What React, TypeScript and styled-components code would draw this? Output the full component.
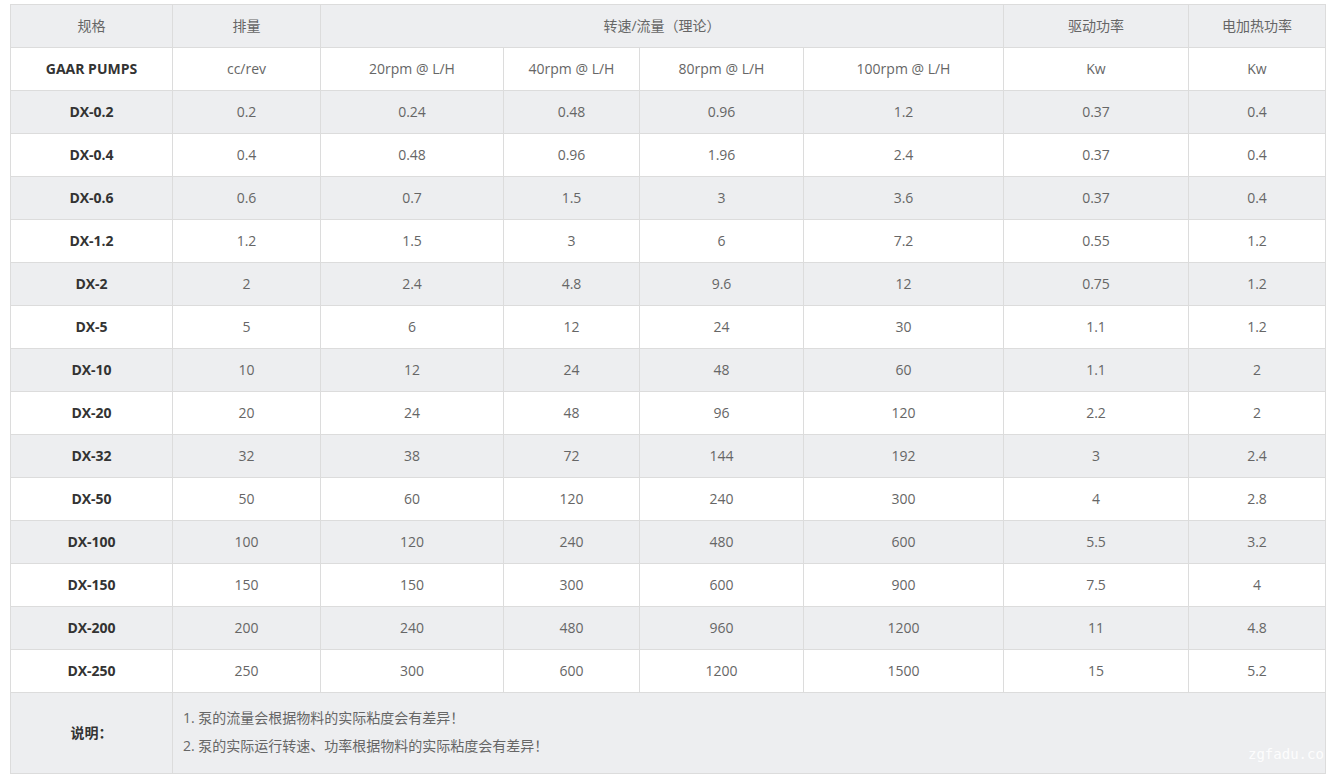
import * as React from 'react';
import styled, { createGlobalStyle } from 'styled-components';

const GlobalStyle = createGlobalStyle`
  html, body {
    margin: 0;
    padding: 0;
    background: #fff;
  }
  body {
    font-family: 'Open Sans', 'Noto Sans CJK SC', sans-serif;
    color: #666;
  }
`;

const Page = styled.div`
  position: relative;
  width: 1339px;
  height: 778px;
  padding: 4px 0 0 10px;
  box-sizing: border-box;
  overflow: hidden;
`;

const Table = styled.table`
  border-collapse: collapse;
  table-layout: fixed;
  width: 1315px;
  font-size: 14px;
`;

const Row = styled.tr<{ $shade?: boolean }>`
  height: 43px;
  background: ${(p) => (p.$shade ? '#edeef0' : '#fff')};
`;

const Cell = styled.td<{ $bold?: boolean }>`
  border: 1px solid #dcdcdc;
  text-align: center;
  vertical-align: middle;
  padding: 0 6px 2px;
  color: ${(p) => (p.$bold ? '#333' : '#666')};
  font-weight: ${(p) => (p.$bold ? 700 : 400)};
  white-space: nowrap;
`;

const NoteRow = styled.tr`
  height: 81px;
  background: #edeef0;
`;

const NoteCell = styled.td`
  border: 1px solid #dcdcdc;
  text-align: left;
  vertical-align: middle;
  padding: 0 10px 2px;
  line-height: 28px;
  color: #666;
`;

const Watermark = styled.div`
  position: absolute;
  left: 1248px;
  top: 746px;
  font-family: 'DejaVu Sans Mono', 'Liberation Mono', monospace;
  font-size: 14px;
  color: rgba(255, 255, 255, 0.9);
  white-space: nowrap;
`;

const widths = [162, 148, 183, 136, 164, 200, 185, 137];

const rows: string[][] = [
  ['DX-0.2', '0.2', '0.24', '0.48', '0.96', '1.2', '0.37', '0.4'],
  ['DX-0.4', '0.4', '0.48', '0.96', '1.96', '2.4', '0.37', '0.4'],
  ['DX-0.6', '0.6', '0.7', '1.5', '3', '3.6', '0.37', '0.4'],
  ['DX-1.2', '1.2', '1.5', '3', '6', '7.2', '0.55', '1.2'],
  ['DX-2', '2', '2.4', '4.8', '9.6', '12', '0.75', '1.2'],
  ['DX-5', '5', '6', '12', '24', '30', '1.1', '1.2'],
  ['DX-10', '10', '12', '24', '48', '60', '1.1', '2'],
  ['DX-20', '20', '24', '48', '96', '120', '2.2', '2'],
  ['DX-32', '32', '38', '72', '144', '192', '3', '2.4'],
  ['DX-50', '50', '60', '120', '240', '300', '4', '2.8'],
  ['DX-100', '100', '120', '240', '480', '600', '5.5', '3.2'],
  ['DX-150', '150', '150', '300', '600', '900', '7.5', '4'],
  ['DX-200', '200', '240', '480', '960', '1200', '11', '4.8'],
  ['DX-250', '250', '300', '600', '1200', '1500', '15', '5.2'],
];

export default function App() {
  return (
    <>
      <GlobalStyle />
      <Page>
        <Table>
          <colgroup>
            {widths.map((w, i) => (
              <col key={i} style={{ width: w }} />
            ))}
          </colgroup>
          <tbody>
            <Row $shade>
              <Cell>规格</Cell>
              <Cell>排量</Cell>
              <Cell colSpan={4}>转速/流量（理论）</Cell>
              <Cell>驱动功率</Cell>
              <Cell>电加热功率</Cell>
            </Row>
            <Row>
              <Cell $bold>GAAR PUMPS</Cell>
              <Cell>cc/rev</Cell>
              <Cell>20rpm @ L/H</Cell>
              <Cell>40rpm @ L/H</Cell>
              <Cell>80rpm @ L/H</Cell>
              <Cell>100rpm @ L/H</Cell>
              <Cell>Kw</Cell>
              <Cell>Kw</Cell>
            </Row>
            {rows.map((r, i) => (
              <Row key={r[0]} $shade={i % 2 === 0}>
                {r.map((v, j) => (
                  <Cell key={j} $bold={j === 0}>
                    {v}
                  </Cell>
                ))}
              </Row>
            ))}
            <NoteRow>
              <Cell $bold>说明：</Cell>
              <NoteCell colSpan={7}>
                1. 泵的流量会根据物料的实际粘度会有差异！
                <br />
                2. 泵的实际运行转速、功率根据物料的实际粘度会有差异！
              </NoteCell>
            </NoteRow>
          </tbody>
        </Table>
        <Watermark>zgfadu.co</Watermark>
      </Page>
    </>
  );
}
